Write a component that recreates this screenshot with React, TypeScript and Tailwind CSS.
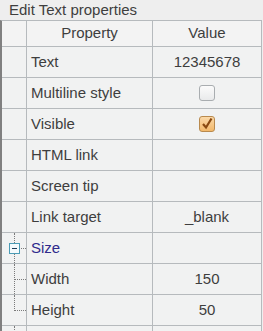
import React from "react";

type Row = {
  label: string;
  value?: string;
  check?: "on" | "off";
  tree?: "group" | "child" | "last";
};

const rows: Row[] = [
  { label: "Text", value: "12345678" },
  { label: "Multiline style", check: "off" },
  { label: "Visible", check: "on" },
  { label: "HTML link" },
  { label: "Screen tip" },
  { label: "Link target", value: "_blank" },
  { label: "Size", tree: "group" },
  { label: "Width", value: "150", tree: "child" },
  { label: "Height", value: "50", tree: "last" },
];

function CheckBox({ on }: { on: boolean }) {
  if (!on) {
    return (
      <div className="w-[16px] h-[16px] rounded-[3px] border border-[#a9adb0] bg-gradient-to-b from-[#fbfbfb] to-[#e9eaeb]" />
    );
  }
  return (
    <div className="w-[16px] h-[16px] rounded-[3px] border border-[#b98a4e] bg-gradient-to-b from-[#fbd9a8] to-[#f2b86a] flex items-center justify-center">
      <svg width="14" height="14" viewBox="0 0 14 14">
        <path d="M3 7 L6 10.5 L11.5 1.5" fill="none" stroke="#8a4a12" strokeWidth="2.2" />
      </svg>
    </div>
  );
}

function TreeCell({ kind }: { kind?: Row["tree"] }) {
  if (!kind) return null;
  const dot = "border-[#7a7a7a] border-dotted";
  if (kind === "group") {
    return (
      <div className="relative w-full h-full">
        <div className={`absolute left-[12px] top-0 h-[10px] border-l ${dot}`} />
        <div className={`absolute left-[12px] top-[21px] bottom-0 border-l ${dot}`} />
        <div className={`absolute left-[17px] top-[15px] w-[7px] border-t ${dot}`} />
        <div className="absolute left-[7px] top-[10px] w-[11px] h-[11px] border border-[#4a9bb5] bg-[#f4fafc] flex items-center justify-center">
          <div className="w-[5px] h-[1px] bg-[#1d3b57]" />
        </div>
      </div>
    );
  }
  return (
    <div className="relative w-full h-full">
      <div
        className={`absolute left-[12px] top-0 border-l ${dot} ${kind === "last" ? "h-[16px]" : "bottom-0"}`}
      />
      <div className={`absolute left-[13px] top-[15px] w-[11px] border-t ${dot}`} />
    </div>
  );
}

export default function App() {
  return (
    <div className="w-[263px] h-[331px] overflow-hidden bg-[#eeeeee] text-[#3e3e3e] font-['Liberation_Sans',Arial,sans-serif]">
      <div className="h-[20px] pl-[9px] pt-[1px] text-[15px] leading-[18px]">
        Edit Text properties
      </div>
      <div className="w-[262px] border-l-2 border-[#808080] border-t border-t-[#b6babd]">
        <div className="grid grid-cols-[25px_126px_109px] h-[26px] bg-[#f3f3f3]">
          <div className="border-r border-b border-[#b6babd]" />
          <div className="border-r border-b border-[#b6babd] flex items-center justify-center text-[15px]">
            Property
          </div>
          <div className="border-r border-b border-[#b6babd] flex items-center justify-center text-[15px]">
            Value
          </div>
        </div>
        {rows.map((r) => (
          <div key={r.label} className="grid grid-cols-[25px_126px_109px] h-[31px] bg-[#f1f2f2]">
            <div className="border-r border-b border-[#b6babd]">
              <TreeCell kind={r.tree} />
            </div>
            <div
              className={`border-r border-b border-[#b6babd] flex items-center pl-[4px] text-[15px] ${
                r.tree === "group" ? "text-[#2f2b8c]" : ""
              }`}
            >
              {r.label}
            </div>
            <div className="border-r border-b border-[#b6babd] flex items-center justify-center text-[15px]">
              {r.check ? <CheckBox on={r.check === "on"} /> : r.value}
            </div>
          </div>
        ))}
        <div className="grid grid-cols-[25px_126px_109px] h-[31px] bg-[#f1f2f2]">
          <div className="border-r border-[#b6babd] relative">
            <div className="absolute left-[12px] top-0 h-[8px] border-l border-dotted border-[#7a7a7a]" />
          </div>
          <div className="border-r border-[#b6babd]" />
          <div className="border-r border-[#b6babd]" />
        </div>
      </div>
    </div>
  );
}
